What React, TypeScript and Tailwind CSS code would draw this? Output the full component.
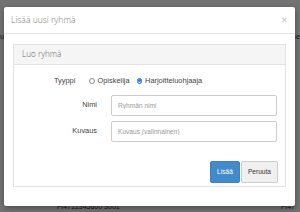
import { useState } from 'react';

export default function App() {
    const [tyyppi, setTyyppi] = useState('ohjaaja');

    return (
        <div className="relative h-[212px] w-[300px] overflow-hidden bg-white font-['Liberation_Sans',Arial,sans-serif]">
            {/* page behind the backdrop */}
            <div className="absolute left-0 top-[31px] text-[7.4px] text-[#333]">u</div>
            <div className="absolute right-0 top-[31px] text-[7.4px] text-[#333]">ne</div>
            <div className="absolute left-[57px] top-[202px] text-[7px] text-[#333]">FI4712345600 3001</div>
            <div className="absolute left-[281px] top-[202px] text-[7px] text-[#333]">FI47</div>
            <div className="absolute inset-0 bg-black/55" />

            {/* modal */}
            <div className="absolute left-[4px] top-[7px] w-[291px] rounded-[2px] bg-white shadow-[0_2px_6px_rgba(0,0,0,0.35)]">
                <div className="flex h-[27px] items-center justify-between border-b border-[#e5e5e5] pl-[7px] pr-[8px]">
                    <h4 className="pt-[1px] font-['Open_Sans',sans-serif] text-[8.6px] font-light text-[#777]">Lisää uusi ryhmä</h4>
                    <button className="text-[9px] font-bold leading-none text-[#ccc]">×</button>
                </div>

                <div className="px-[9px] pb-[19px] pt-[10px]">
                    <div className="border border-[#e3e3e3]">
                        <div className="flex h-[20px] items-center border-b border-[#e3e3e3] bg-[#f5f5f5] pl-[8px] font-['Open_Sans',sans-serif] text-[8.2px] font-light text-[#666]">
                            Luo ryhmä
                        </div>

                        <div className="px-[7px] pb-[3px] pt-[9px] text-[7.4px] text-[#444]">
                            <div className="flex h-[14px] items-center">
                                <span className="ml-[33px] w-[35px]">Tyyppi</span>
                                <label className="flex items-center gap-[3px]">
                                    <span className="flex h-[5.5px] w-[5.5px] rounded-full border border-[#888] bg-white" onClick={() => setTyyppi('opiskelija')} />
                                    Opiskelija
                                </label>
                                <label className="ml-[7px] flex items-center gap-[3px]">
                                    <span className="flex h-[5.5px] w-[5.5px] items-center justify-center rounded-full border border-[#1a73e8] bg-white" onClick={() => setTyyppi('ohjaaja')}>
                                        {tyyppi === 'ohjaaja' && <span className="h-[3px] w-[3px] rounded-full bg-[#1a73e8]" />}
                                    </span>
                                    Harjoitteluohjaaja
                                </label>
                            </div>

                            <div className="mt-[7px] flex items-start">
                                <label className="w-[90px] pr-[14px] pt-[4px] text-right">Nimi</label>
                                <input
                                    placeholder="Ryhmän nimi"
                                    className="h-[21px] w-[166px] rounded-[2px] border border-[#ccc] px-[6px] text-[6.6px] text-[#555] placeholder:text-[#999]"
                                />
                            </div>

                            <div className="mt-[5px] flex items-start">
                                <label className="w-[90px] pr-[14px] pt-[4px] text-right">Kuvaus</label>
                                <input
                                    placeholder="Kuvaus (valinnainen)"
                                    className="h-[21px] w-[166px] rounded-[2px] border border-[#ccc] px-[6px] text-[6.6px] text-[#555] placeholder:text-[#999]"
                                />
                            </div>

                            <div className="mt-[19px] flex justify-end gap-[1px]">
                                <button className="h-[22px] w-[30px] rounded-[2px] border border-[#3a82c4] bg-[#428bca] text-[6.6px] text-white">Lisää</button>
                                <button className="h-[22px] w-[37px] rounded-[2px] border border-[#ccc] bg-[#f0f0f0] text-[6.6px] text-[#333]">Peruuta</button>
                            </div>
                        </div>
                    </div>
                </div>
            </div>
        </div>
    );
}
